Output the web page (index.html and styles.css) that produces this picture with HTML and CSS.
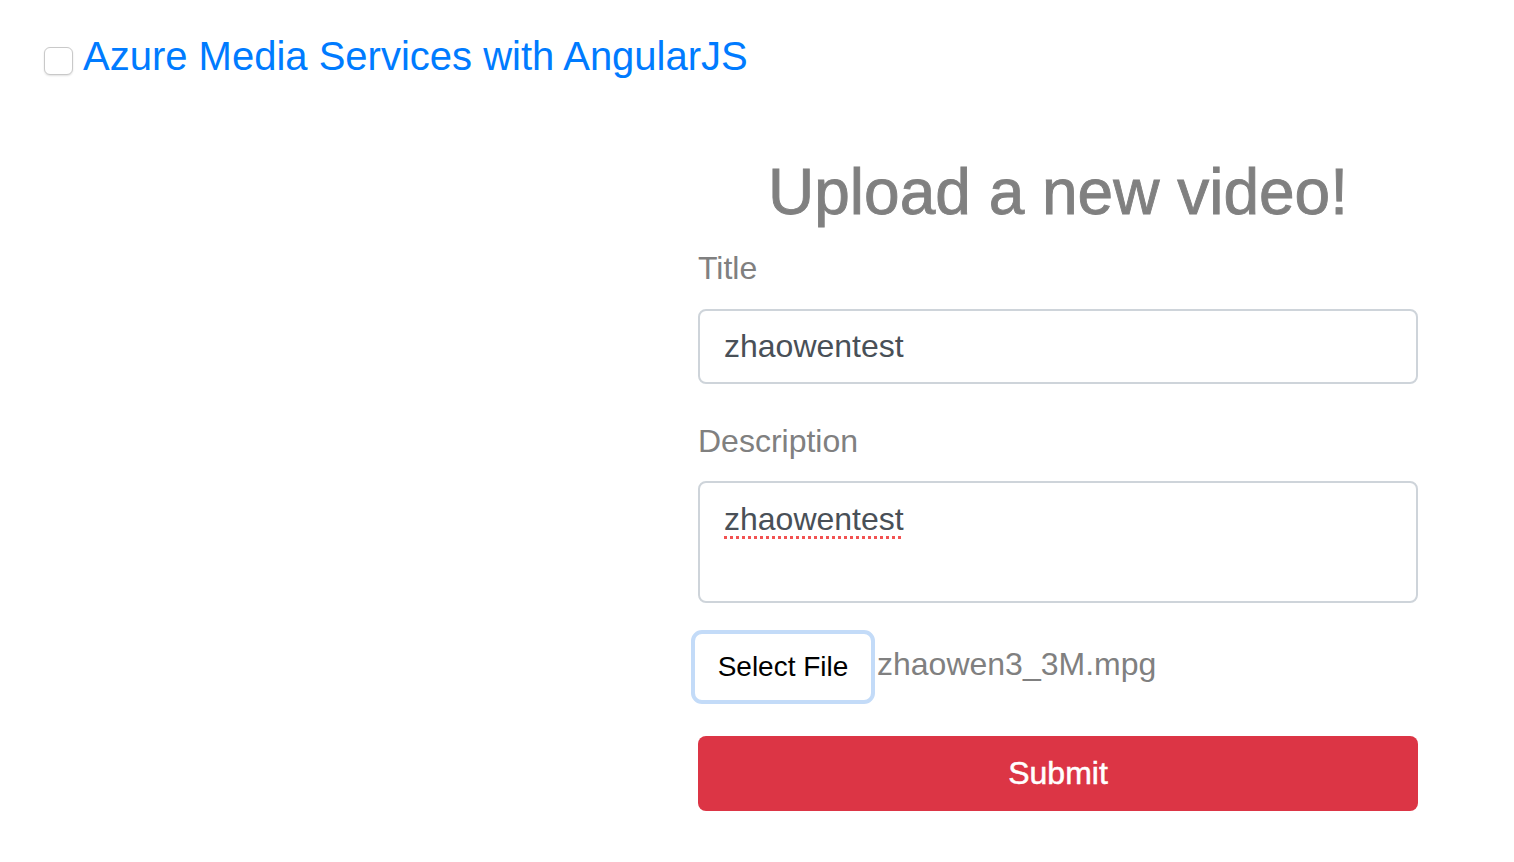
FILE: index.html
```html
<!DOCTYPE html>
<html lang="en">
<head>
<meta charset="utf-8">
<title>Azure Media Services with AngularJS</title>
<link rel="stylesheet" href="styles.css">
</head>
<body>
<header class="topbar">
  <span class="checkbox" aria-hidden="true"></span>
  <a class="brand" href="#">Azure Media Services with AngularJS</a>
</header>
<main class="layout">
  <form class="upload-form">
    <h2 class="form-title">Upload a new video!</h2>
    <div class="form-group">
      <label class="form-label" for="title">Title</label>
      <input class="form-control" id="title" type="text" value="zhaowentest">
    </div>
    <div class="form-group form-group-desc">
      <label class="form-label">Description</label>
      <div class="form-control textarea" role="textbox"><span class="misspelled">zhaowentest</span></div>
    </div>
    <div class="file-row">
      <button class="file-button" type="button">Select File</button>
      <span class="file-name">zhaowen3_3M.mpg</span>
    </div>
    <button class="submit" type="button">Submit</button>
  </form>
</main>
</body>
</html>
```

FILE: styles.css
```css
* { box-sizing: border-box; }

html, body {
  margin: 0;
  padding: 0;
  background: #ffffff;
  font-family: "Liberation Sans", Arial, Helvetica, sans-serif;
}

.topbar {
  display: flex;
  align-items: flex-start;
  gap: 10px;
  padding: 32px 0 0 44px;
  height: 80px;
}

.checkbox {
  width: 29px;
  height: 28px;
  margin-top: 15px;
  border: 1.5px solid #c9c9c9;
  border-radius: 6px;
  background: #ffffff;
  box-shadow: 0 1px 2px rgba(0, 0, 0, 0.12);
}

.brand {
  font-size: 40px;
  line-height: 48px;
  color: #007bff;
  text-decoration: none;
}

.layout {
  display: flex;
  padding-left: 698px;
  padding-top: 74px;
}

.upload-form {
  width: 720px;
  display: flex;
  flex-direction: column;
}

.form-title {
  margin: 0 0 13px 0;
  font-size: 64px;
  line-height: 77px;
  font-weight: 500;
  color: #808080;
  -webkit-text-stroke: 0.9px #808080;
  text-align: center;
}

.form-group {
  display: flex;
  flex-direction: column;
  margin-bottom: 33px;
}

.form-group-desc { margin-bottom: 27px; }

.form-label {
  font-size: 32px;
  line-height: 48px;
  color: #808080;
  margin-bottom: 17px;
}

.form-group-desc .form-label { margin-bottom: 16px; }

.form-control {
  display: block;
  width: 100%;
  height: 75px;
  padding: 0 24px;
  border: 2px solid #ced4da;
  border-radius: 8px;
  font-family: inherit;
  font-size: 32px;
  line-height: 48px;
  color: #495057;
  background: #ffffff;
  outline: none;
}

.textarea {
  height: 122px;
  padding: 12px 24px;
}

.misspelled {
  text-decoration: underline dotted #f25252;
  text-decoration-thickness: 3px;
  text-underline-offset: 6px;
}

.file-row {
  display: flex;
  align-items: center;
  gap: 2px;
  margin-left: -7px;
  margin-bottom: 32px;
}

.file-button {
  width: 184px;
  height: 74px;
  border: 4px solid #c3dbf8;
  border-radius: 11px;
  background: #ffffff;
  font-family: inherit;
  font-size: 28px;
  color: #000000;
  padding: 0;
}

.file-name {
  font-size: 32px;
  color: #808080;
  margin-top: -5px;
}

.submit {
  width: 100%;
  height: 75px;
  border: none;
  border-radius: 8px;
  background: #dc3545;
  color: #ffffff;
  -webkit-text-stroke: 0.5px #ffffff;
  font-family: inherit;
  font-size: 32px;
  padding: 0;
}
```
